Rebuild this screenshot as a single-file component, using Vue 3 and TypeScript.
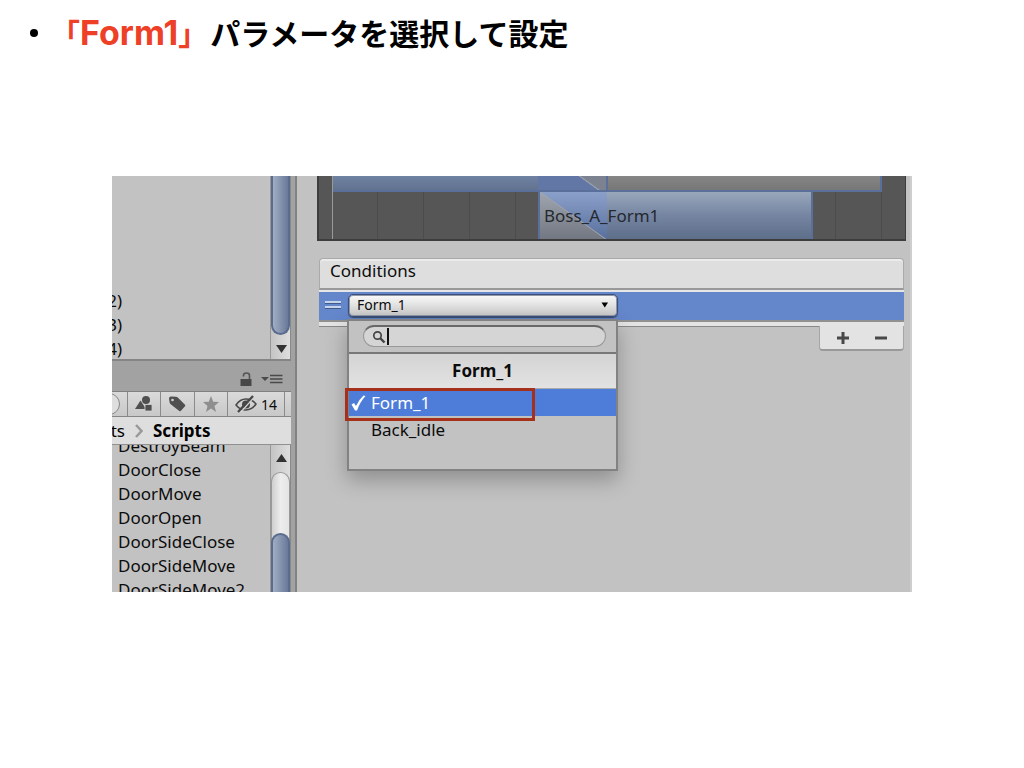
<script setup lang="ts">
import { ref } from 'vue'

const hierarchyRows: string[] = ['(2)', '(3)', '(4)']
const scripts: string[] = [
  'DestroyBeam',
  'DoorClose',
  'DoorMove',
  'DoorOpen',
  'DoorSideClose',
  'DoorSideMove',
  'DoorSideMove2',
]
const parameters: string[] = ['Form_1', 'Back_idle']
const selected = ref<string>('Form_1')
const query = ref<string>('')
const gridLines: number[] = [58, 104, 150, 196, 516, 562]
</script>

<template>
  <main class="slide">
    <ul class="points">
      <li><span class="dot"></span><h1><span class="accent">「<span class="latin">Form1</span>」</span>パラメータを選択して設定</h1></li>
    </ul>

    <section class="editor">
      <aside class="left">
        <div class="hierarchy">
          <ul class="cut-rows">
            <li v-for="row in hierarchyRows" :key="row">{{ row }}</li>
          </ul>
          <div class="scroll">
            <div class="thumb thumb-top"></div>
            <svg class="arrow" viewBox="0 0 19 24" width="19" height="24"><path d="M5 10h11l-5.500 8z" fill="#333" /></svg>
          </div>
        </div>

        <div class="tabbar">
          <svg width="12" height="15" viewBox="0 0 12 15"><path d="M.5 7h11v7H.5z" fill="#484848" /><path d="M3.500 4.500V3.500q0-2.500 3-2.500t3 2.500V7" fill="none" stroke="#555" stroke-width="1.600" /></svg>
          <svg width="22" height="12" viewBox="0 0 22 12"><path d="M0 4h8L4 8z" fill="#4a4a4a" /><path d="M9 2.500h12.500M9 6h12.500M9 9.500h12.500" stroke="#4a4a4a" stroke-width="1.700" /></svg>
        </div>

        <div class="toolbar">
          <div class="search-end"><i></i></div>
          <button type="button" aria-label="Filter by type">
            <svg width="18" height="18" viewBox="0 0 18 18" fill="#4f4f4f"><circle cx="11" cy="5" r="4" /><path d="M5.500 5.500 11 14H0z" /><path d="M10 9.500h7V16h-7z" stroke="#d2d2d2" stroke-width=".8" /></svg>
          </button>
          <button type="button" aria-label="Filter by label">
            <svg width="18" height="18" viewBox="0 0 18 18"><path d="M1 3.500Q1 1.500 3 1.500l5 .3q1 0 2 1l7 7q.7.700 0 1.400L12.700 16q-.7.700-1.400 0L3 9.500Q2 8.700 1.700 7.700z" fill="#4f4f4f" /><circle cx="4.500" cy="5" r="1.300" fill="#d2d2d2" /></svg>
          </button>
          <button type="button" aria-label="Favourites">
            <svg width="18" height="18" viewBox="0 0 18 18"><path d="m9 1 2.200 5.700 5.800.3-4.500 3.900 1.500 6L9 13.500 4 17l1.500-6.100L1 7l5.800-.3z" fill="#8e8e8e" /></svg>
          </button>
          <button type="button" class="hidden-count">
            <svg width="22" height="18" viewBox="0 0 22 18" fill="none" stroke="#484848" stroke-width="1.500"><path d="M1 10q4-6 10-6t10 5q-4 6-10 6T1 10z" /><circle cx="11" cy="9.500" r="4" fill="#484848" stroke="none" /><path d="M5.500 17.500 19.500 1.500" stroke="#d2d2d2" stroke-width="1.500" /><path d="M3 17 18 1" stroke-width="2.300" /></svg>
            14
          </button>
        </div>

        <nav class="crumbs">
          <span class="crumb-cut"><span>ts</span></span>
          <svg width="10" height="14" viewBox="0 0 10 14"><path d="m2 1 5.500 6L2 13" fill="none" stroke="#999" stroke-width="2.500" /></svg>
          <b>Scripts</b>
        </nav>

        <div class="project">
          <ul class="files">
            <li v-for="name in scripts" :key="name">{{ name }}</li>
          </ul>
          <div class="scroll">
            <svg class="arrow up" viewBox="0 0 19 27" width="19" height="27"><path d="M5 17h11l-5.500-8z" fill="#333" /></svg>
            <div class="track"><div class="thumb thumb-bottom"></div></div>
          </div>
        </div>
      </aside>

      <div class="divider"></div>

      <div class="inspector">
        <div class="timeline">
          <i v-for="x in gridLines" :key="x" class="grid-line" :style="{ left: x + 'px' }"></i>
          <i class="playhead"></i>
          <div class="clip source"></div>
          <div class="clip blend"></div>
          <div class="clip idle"></div>
          <div class="clip target">
            <svg width="67" height="48" viewBox="0 0 67 48">
              <defs>
                <linearGradient id="fadeGrey" x1="0" y1="0" x2="0" y2="1"><stop offset="0" stop-color="#a0a6af" /><stop offset="1" stop-color="#717680" /></linearGradient>
                <linearGradient id="fadeBlue" x1="0" y1="0" x2="0" y2="1"><stop offset="0" stop-color="#8ba0c9" /><stop offset="1" stop-color="#586f9d" /></linearGradient>
              </defs>
              <path d="M0 0h67v48H0z" fill="url(#fadeBlue)" />
              <path d="M0 0v48h67z" fill="url(#fadeGrey)" />
              <path d="m0 0 67 48" stroke="#a0a6af" />
            </svg>
            <span>Boss_A_Form1</span>
          </div>
        </div>

        <div class="conditions">
          <h2>Conditions</h2>
          <div class="row">
            <span class="grip"></span>
            <div class="picker">
              <select v-model="selected" aria-label="Condition parameter">
                <option v-for="p in parameters" :key="p">{{ p }}</option>
              </select>
              <svg class="caret-down" width="8" height="6" viewBox="0 0 8 6"><path d="M.5.500h6.500L3.800 5.500z" fill="#000" /></svg>

              <div class="popup">
                <div class="find">
                  <label>
                    <svg width="14" height="14" viewBox="0 0 14 14" fill="none" stroke="#444"><circle cx="5.500" cy="5.500" r="3.700" stroke-width="1.700" /><path d="m8 8 4.500 4.500" stroke-width="2.400" /></svg>
                    <i class="cursor"></i>
                    <input v-model="query" type="text" aria-label="Search parameters" />
                  </label>
                </div>
                <h3>Form_1</h3>
                <ul>
                  <li v-for="p in parameters" :key="p">
                    <button type="button" :class="{ active: p === selected }" @click="selected = p">
                      <svg v-if="p === selected" width="15" height="16" viewBox="0 0 15 16"><path d="M.5 9.500 3 8l2 3Q8 4.500 12.500.5l2 .5Q9 7 6 15.500H4z" fill="#fff" /></svg>
                      {{ p }}
                    </button>
                  </li>
                </ul>
                <div class="marker"></div>
              </div>
            </div>
          </div>
          <div class="base"></div>
          <div class="footer">
            <button type="button" aria-label="Add condition"><svg width="14" height="14" viewBox="0 0 14 14"><path d="M1 7h12M7 1v12" stroke="#484848" stroke-width="3" /></svg></button>
            <button type="button" aria-label="Remove condition"><svg width="14" height="14" viewBox="0 0 14 14"><path d="M1 7h12" stroke="#484848" stroke-width="3" /></svg></button>
          </div>
        </div>
      </div>
    </section>
  </main>
</template>

<style>
body { margin: 0; background: #fff; }
</style>

<style scoped>
* { box-sizing: border-box; }
ul, h1, h2, h3 { margin: 0; padding: 0; list-style: none; }
button, input, select { font: inherit; color: inherit; border: 0; padding: 0; margin: 0; background: none; }
svg { display: block; flex: none; }
.slide { font-family: "Noto Sans", "Open Sans", sans-serif; color: #0c0c0c; }
.points { padding: 10px 30px 0; height: 176px; }
.points li { display: flex; align-items: center; }
.dot { width: 8px; height: 8px; border-radius: 50%; background: #000; }
h1 { margin-left: 12px; font: 700 30px/44px "Noto Sans CJK JP", sans-serif; color: #000; white-space: nowrap; }
.accent { color: #ee4026; margin-right: 2px; }
.latin { font-family: Inter, sans-serif; font-size: 34px; font-weight: 700; }

.editor { display: flex; margin: 0 112px; background: #c2c2c2; overflow: hidden; font-size: 17px; }
.left { width: 179px; flex: none; background: #c2c2c2; }
.hierarchy { display: flex; height: 185px; border-bottom: 2px solid #858585; }
.cut-rows { flex: 1; display: flex; flex-direction: column; justify-content: flex-end; overflow: hidden; line-height: 24px; margin-bottom: -2px; }
.cut-rows li { width: 10px; display: flex; justify-content: flex-end; white-space: nowrap; }
.scroll { width: 21px; display: flex; flex-direction: column; flex: none; border-left: 1px solid #999; border-right: 1px solid #888; background: linear-gradient(90deg, #c4c4c4, #dedede); }
.thumb { border: 2px solid #5a6b8e; background: linear-gradient(90deg, #a0adc3, #8b99b2 40%, #69799a); }
.thumb-top { flex: 1; border-top: 0; border-radius: 0 0 10px 10px; }
.tabbar { height: 30px; display: flex; align-items: center; justify-content: flex-end; gap: 9px; padding: 6px 8px 0 0; background: #a2a2a2; }
.toolbar { height: 26px; display: flex; border-top: 1px solid #808080; border-bottom: 1px solid #858585; background: linear-gradient(#dadada, #c8c8c8); }
.search-end { width: 15px; overflow: hidden; display: flex; justify-content: flex-end; align-items: center; padding-right: 7px; }
.search-end i { width: 40px; height: 22px; flex: none; border: 1px solid #888; border-radius: 11px; background: #dedede; }
.toolbar button { flex: 1; border-left: 1px solid #8a8a8a; display: flex; align-items: center; justify-content: center; }
.toolbar .hidden-count { flex: none; width: 58px; gap: 4px; font-size: 14px; border-right: 1px solid #8a8a8a; margin-right: 6px; }
.crumbs { height: 28px; display: flex; align-items: center; gap: 9px; background: #dedede; border-bottom: 1px solid #909090; color: #000; }
.crumb-cut { width: 13px; display: flex; justify-content: flex-end; overflow: hidden; }
.project { height: 147px; display: flex; overflow: hidden; }
.files { flex: 1; padding-left: 6px; margin-top: -11px; line-height: 24px; white-space: nowrap; }
.track { flex: 1; display: flex; flex-direction: column; justify-content: flex-end; border: 1px solid #999; border-bottom: 0; border-radius: 10px 10px 0 0; background: linear-gradient(90deg, #cfcfcf, #ededed 50%, #e4e4e4); }
.thumb-bottom { height: 59px; border-bottom: 0; border-radius: 10px 10px 0 0; margin: 0 -1px; }
.divider { width: 6px; flex: none; background: #a2a2a2; border-right: 2px solid #828282; }

.inspector { flex: 1; min-width: 0; padding: 0 4px 0 20px; border-right: 2px solid #cecece; }
.timeline { position: relative; height: 65px; overflow: hidden; background: #565656; border: solid #3d3d3d; border-width: 0 1px 2px 2px; }
.timeline i { position: absolute; top: 0; bottom: 0; width: 1px; background: #4c4c4c; }
.timeline .playhead { left: 13px; background: #999; }
.clip { position: absolute; top: 0; height: 16px; border: 0 solid #5b6f9b; border-bottom-width: 2px; }
.source { left: 14px; width: 206px; background: linear-gradient(#6f82a2, #62738f); }
.blend { left: 219px; width: 70px; border-right-width: 2px; background: linear-gradient(36deg, transparent 68%, #a0a6af 69%, #7c8290 72%), #6277a5; }
.idle { left: 289px; width: 274px; border-right-width: 2px; background: linear-gradient(#868686, #777); }
.target { left: 219px; top: 16px; width: 275px; height: 48px; border-width: 0 2px; background: linear-gradient(#99a7bb, #7484a1 50%, #5d6e89); }
.target svg { position: absolute; left: 0; top: 0; }
.target span { position: relative; display: block; padding-left: 4px; line-height: 48px; color: #24292f; }
.conditions { margin: 17px 2px 0; }
h2 { height: 32px; padding-left: 10px; border: 1px solid #aaa; border-bottom: 2px solid #999; border-radius: 4px 4px 0 0; background: #dedede; font-size: 17px; line-height: 24px; font-weight: 400; box-shadow: inset 0 2px #ebebeb; }
.row { height: 32px; display: flex; align-items: flex-start; border-top: 2px solid #e6e6e6; border-bottom: 2px solid #909090; background: #6486ca; padding: 2px 0 0 6px; }
.grip { width: 16px; height: 7px; margin: 7px 7px 0 0; border: solid #c5d3ed; border-width: 2px 0; box-shadow: 0 1px #415988, inset 0 1px #415988; }
.picker { position: relative; width: 270px; }
select { display: block; width: 270px; height: 23px; appearance: none; padding: 0 0 2px 8px; border: 1px solid #3b4f7c; border-radius: 5px; background: linear-gradient(#fafafa, #c7c7c7); box-shadow: inset 0 0 0 1px #8f96a5, 0 1px 1px #34466b; font-size: 14px; line-height: 19px; }
.caret-down { position: absolute; right: 9px; top: 8px; pointer-events: none; }
.popup { position: absolute; z-index: 2; left: -1px; top: 25px; width: 271px; height: 152px; border: 2px solid #828282; background: #c2c2c2; box-shadow: 0 9px 20px #0004; }
.find { height: 33px; padding: 4px 10px 0 14px; border-bottom: 2px solid #777; }
.find label { width: 243px; height: 22px; display: flex; align-items: center; padding-left: 8px; border: 1px solid #999; border-top: 2px solid #686868; border-radius: 11px; background: #d5d5d5; }
.find input { flex: 1; min-width: 0; height: 18px; outline: 0; font-size: 14px; }
.cursor { width: 2px; height: 17px; margin-left: 1px; background: #111; }
h3 { height: 35px; font-size: 17px; line-height: 34px; text-align: center; background: linear-gradient(#d4d4d4, #e2e2e2); border-bottom: 1px solid #aaa; }
.popup button { position: relative; display: block; width: 100%; height: 27px; padding-left: 22px; text-align: left; line-height: 27px; }
.popup button.active { background: #4d7dd9; color: #fff; }
.popup button svg { position: absolute; left: 2px; top: 6px; }
.marker { position: absolute; left: -4px; top: 67px; width: 190px; height: 33px; border: 3px solid #a5301b; pointer-events: none; }
.base { height: 5px; background: #e4e4e4; border-bottom: 1px solid #888; }
.footer { width: 85px; height: 25px; margin: -1px 0 0 auto; display: flex; align-items: center; justify-content: center; gap: 24px; background: #e3e3e3; border: 1px solid #a5a5a5; border-top: 0; border-bottom: 2px solid #999; border-radius: 0 0 4px 4px; }
</style>
